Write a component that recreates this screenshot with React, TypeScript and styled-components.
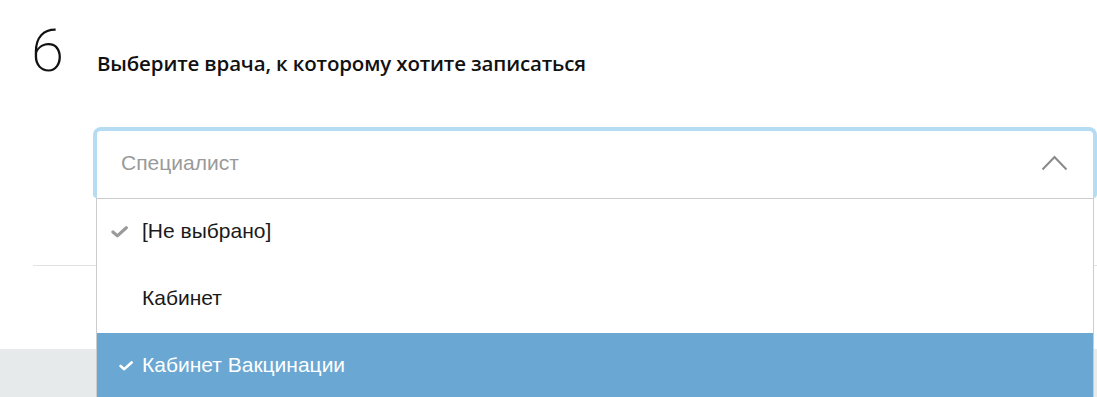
import React from "react";
import styled, { createGlobalStyle } from "styled-components";

const GlobalStyle = createGlobalStyle`
  html, body { margin: 0; padding: 0; background: #ffffff; }
  body { font-family: "Liberation Sans", Arial, sans-serif; }
  * { box-sizing: border-box; }
`;

const Page = styled.div`
  position: relative;
  width: 1097px;
  height: 397px;
  overflow: hidden;
  background: #ffffff;
`;

const Header = styled.div`
  display: flex;
  align-items: baseline;
  padding: 21px 0 0 31px;
  height: 97px;
`;

const StepNumber = styled.div`
  width: 66px;
  font-family: "Roboto", "Lato", sans-serif;
  font-weight: 200;
  font-size: 60px;
  line-height: 1;
  color: #111111;
`;

const Title = styled.h2`
  margin: 0;
  font-family: "Open Sans", "Noto Sans", sans-serif;
  font-weight: 600;
  font-size: 20.5px;
  color: #111111;
  letter-spacing: -0.15px;
`;

const SelectWrap = styled.div`
  position: relative;
  margin-top: 30px;
  margin-left: 93px;
  width: 1004px;
`;

const SelectBox = styled.div`
  height: 71px;
  border: 4px solid #b6dcf4;
  border-bottom: none;
  border-radius: 8px 8px 4px 4px;
  background: #ffffff;
  display: flex;
  align-items: center;
  justify-content: space-between;
  padding: 0 25px 3px 24px;
`;

const Placeholder = styled.span`
  font-size: 21px;
  color: #9a9a9a;
`;

const Menu = styled.ul`
  position: absolute;
  top: 71px;
  left: 3px;
  right: 3px;
  margin: 0;
  padding: 0;
  list-style: none;
  background: #ffffff;
  border-top: 1px solid #cccccc;
  border-left: 1px solid #cccccc;
  border-right: 1px solid #cccccc;
  z-index: 2;
`;

const Item = styled.li<{ $active?: boolean }>`
  height: 67px;
  display: flex;
  align-items: center;
  padding: 0 0 3px 14px;
  font-size: 21px;
  color: ${(p) => (p.$active ? "#ffffff" : "#1a1a1a")};
  background: ${(p) => (p.$active ? "#6aa7d2" : "#ffffff")};
`;

const CheckSlot = styled.span<{ $offset: number }>`
  width: 31px;
  display: flex;
  align-items: center;
  padding: 2px 0 0 ${(p) => p.$offset}px;
`;

const Divider = styled.div`
  margin-top: 67px;
  margin-left: 33px;
  height: 1px;
  background: #e2e2e2;
`;

const Footer = styled.div`
  margin-top: 83px;
  height: 60px;
  background: #e6eaea;
`;

const Check = ({ color, w }: { color: string; w: number }) => (
  <svg width={w} height={w * 0.7} viewBox="0 0 16 11">
    <path
      d="M1.8 5.6 L6 9.2 L14.4 1.6"
      fill="none"
      stroke={color}
      strokeWidth="3"
      strokeLinecap="round"
      strokeLinejoin="round"
    />
  </svg>
);

const Chevron = () => (
  <svg width="27" height="16" viewBox="0 0 27 16">
    <polyline
      points="1.5,14.5 13.5,2 25.5,14.5"
      fill="none"
      stroke="#8a8a8a"
      strokeWidth="2"
    />
  </svg>
);

export default function App() {
  return (
    <>
      <GlobalStyle />
      <Page>
        <Header>
          <StepNumber>6</StepNumber>
          <Title>Выберите врача, к которому хотите записаться</Title>
        </Header>
        <SelectWrap>
          <SelectBox>
            <Placeholder>Специалист</Placeholder>
            <Chevron />
          </SelectBox>
          <Menu>
            <Item>
              <CheckSlot $offset={0}>
                <Check color="#9a9a9a" w={17} />
              </CheckSlot>
              [Не выбрано]
            </Item>
            <Item>
              <CheckSlot $offset={0} />
              Кабинет
            </Item>
            <Item $active>
              <CheckSlot $offset={8}>
                <Check color="#ffffff" w={14} />
              </CheckSlot>
              Кабинет Вакцинации
            </Item>
          </Menu>
        </SelectWrap>
        <Divider />
        <Footer />
      </Page>
    </>
  );
}
